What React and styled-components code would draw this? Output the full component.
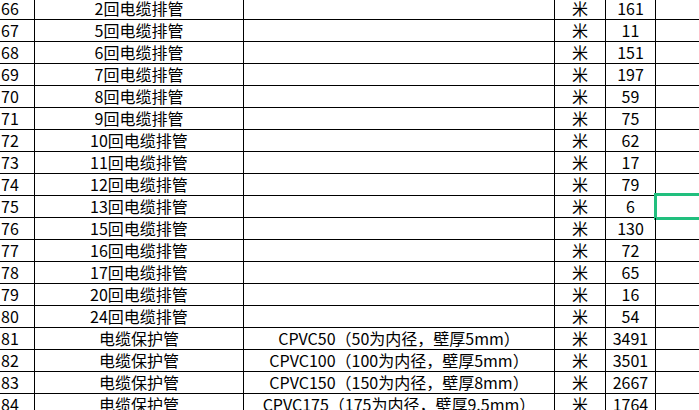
import React from 'react'
import styled, { createGlobalStyle } from 'styled-components'

const GlobalStyle = createGlobalStyle`
  html, body {
    margin: 0;
    padding: 0;
    background: #fff;
    overflow: hidden;
  }
  body {
    font-family: "Noto Sans CJK SC", "Liberation Sans", sans-serif;
    color: #000;
  }
`

const rows = [
  ['66', '2回电缆排管', '', '161'],
  ['67', '5回电缆排管', '', '11'],
  ['68', '6回电缆排管', '', '151'],
  ['69', '7回电缆排管', '', '197'],
  ['70', '8回电缆排管', '', '59'],
  ['71', '9回电缆排管', '', '75'],
  ['72', '10回电缆排管', '', '62'],
  ['73', '11回电缆排管', '', '17'],
  ['74', '12回电缆排管', '', '79'],
  ['75', '13回电缆排管', '', '6'],
  ['76', '15回电缆排管', '', '130'],
  ['77', '16回电缆排管', '', '72'],
  ['78', '17回电缆排管', '', '65'],
  ['79', '20回电缆排管', '', '16'],
  ['80', '24回电缆排管', '', '54'],
  ['81', '电缆保护管', 'CPVC50（50为内径，壁厚5mm）', '3491'],
  ['82', '电缆保护管', 'CPVC100（100为内径，壁厚5mm）', '3501'],
  ['83', '电缆保护管', 'CPVC150（150为内径，壁厚8mm）', '2667'],
  ['84', '电缆保护管', 'CPVC175（175为内径，壁厚9.5mm）', '1764'],
]

const Sheet = styled.div`
  margin-top: -2px;
  width: 699px;
`

const Row = styled.div`
  display: grid;
  grid-template-columns: 35px 209px 311px 51px 50px 1fr;
  height: 22px;
  border-bottom: 1px solid #000;
  box-sizing: border-box;
`

const Cell = styled.div`
  position: relative;
  display: flex;
  align-items: center;
  justify-content: ${(p) => (p.$align === 'left' ? 'flex-start' : 'center')};
  padding-left: ${(p) => (p.$align === 'left' ? '1px' : '0')};
  border-right: ${(p) => (p.$last ? 'none' : '1px solid #000')};
  font-size: 16px;
  line-height: 21px;
  white-space: nowrap;
  box-sizing: border-box;
  overflow: visible;
`

const Selection = styled.div`
  position: absolute;
  top: -3px;
  left: -2px;
  right: -6px;
  bottom: -3px;
  border: 3px solid #21bf7e;
  pointer-events: none;
`

const App = () => {
  return (
    <>
      <GlobalStyle />
      <Sheet>
        {rows.map(([num, name, spec, qty]) => (
          <Row key={num}>
            <Cell $align='left'>{num}</Cell>
            <Cell>{name}</Cell>
            <Cell>{spec}</Cell>
            <Cell>米</Cell>
            <Cell>{qty}</Cell>
            <Cell $last>{num === '75' ? <Selection /> : null}</Cell>
          </Row>
        ))}
      </Sheet>
    </>
  )
}

export default App
